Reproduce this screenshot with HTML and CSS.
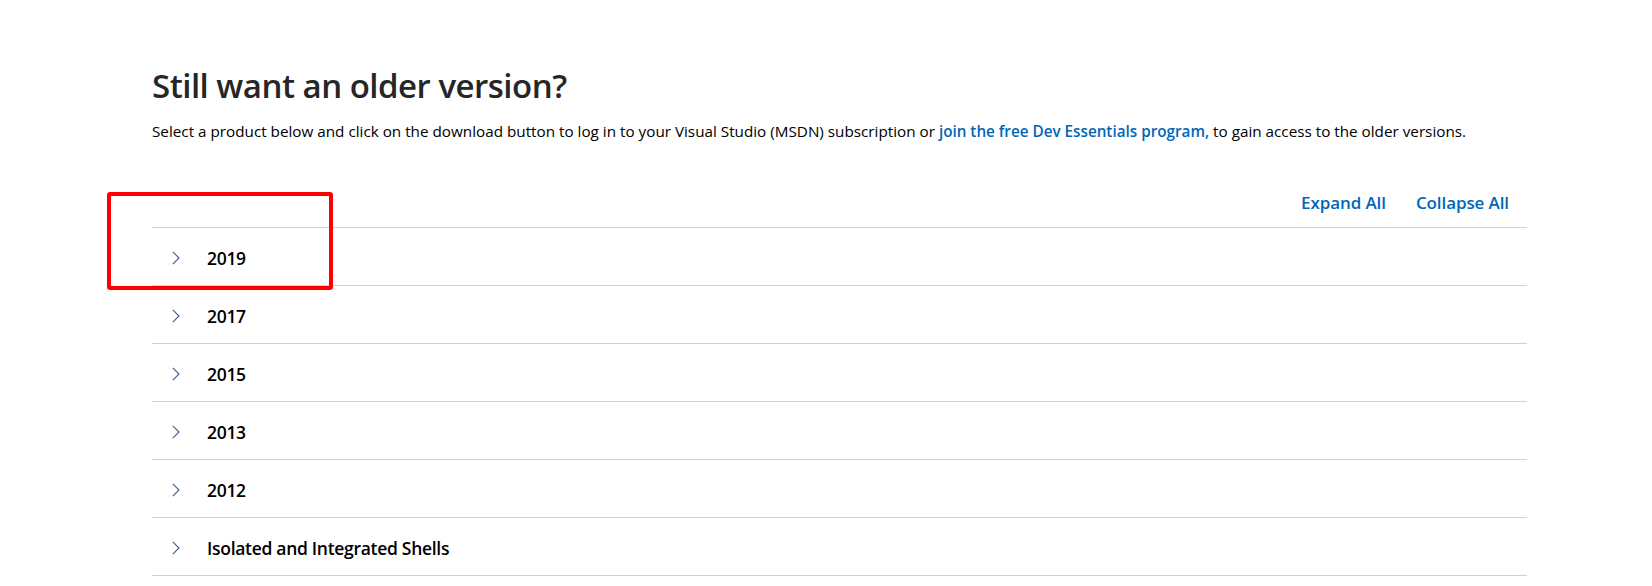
FILE: index.html
```html
<!DOCTYPE html>
<html lang="en">
<head>
<meta charset="utf-8">
<title>Still want an older version?</title>
<link rel="stylesheet" href="styles.css">
</head>
<body>
<main class="page">
  <h2 class="title">Still want an older version?</h2>
  <p class="intro">Select a product below and click on the download button to log in to your Visual Studio (MSDN) subscription or <a class="link" href="#">join the free Dev Essentials program,</a> to gain access to the older versions.</p>
  <div class="toolbar">
    <a class="tool-link" href="#">Expand All</a>
    <a class="tool-link" href="#">Collapse All</a>
  </div>
  <ul class="list">
    <li class="row"><svg class="chev" width="8" height="14" viewBox="0 0 8 14"><polyline points="0.8,0.8 7,7 0.8,13.2"/></svg><span class="label">2019</span></li>
    <li class="row"><svg class="chev" width="8" height="14" viewBox="0 0 8 14"><polyline points="0.8,0.8 7,7 0.8,13.2"/></svg><span class="label">2017</span></li>
    <li class="row"><svg class="chev" width="8" height="14" viewBox="0 0 8 14"><polyline points="0.8,0.8 7,7 0.8,13.2"/></svg><span class="label">2015</span></li>
    <li class="row"><svg class="chev" width="8" height="14" viewBox="0 0 8 14"><polyline points="0.8,0.8 7,7 0.8,13.2"/></svg><span class="label">2013</span></li>
    <li class="row"><svg class="chev" width="8" height="14" viewBox="0 0 8 14"><polyline points="0.8,0.8 7,7 0.8,13.2"/></svg><span class="label">2012</span></li>
    <li class="row"><svg class="chev" width="8" height="14" viewBox="0 0 8 14"><polyline points="0.8,0.8 7,7 0.8,13.2"/></svg><span class="label">Isolated and Integrated Shells</span></li>
  </ul>
  <div class="highlight"></div>
</main>
</body>
</html>
```
FILE: styles.css
```css
html, body {
  margin: 0;
  padding: 0;
  background: #ffffff;
}
body {
  font-family: "Open Sans", "Noto Sans", "Liberation Sans", sans-serif;
  color: #000000;
  overflow: hidden;
}
.page {
  position: relative;
  width: 1375px;
  margin-left: 152px;
  padding-top: 66px;
}
.title {
  margin: 0;
  font-size: 33px;
  line-height: 40px;
  font-weight: 600;
  color: #262626;
  letter-spacing: -0.5px;
}
.intro {
  margin: 15px 0 0;
  font-size: 15.25px;
  line-height: 20px;
  color: #000000;
}
.link {
  color: #0067b8;
  font-weight: 600;
  text-decoration: none;
}
.toolbar {
  display: flex;
  justify-content: flex-end;
  gap: 30px;
  margin-top: 50px;
  padding-right: 18px;
  padding-bottom: 12px;
  border-bottom: 1px solid #d2d2d2;
}
.tool-link {
  font-size: 17px;
  line-height: 24px;
  font-weight: 600;
  color: #0067b8;
  text-decoration: none;
  letter-spacing: -0.1px;
}
.list {
  list-style: none;
  margin: 0;
  padding: 0;
}
.row {
  display: flex;
  align-items: center;
  gap: 27px;
  padding: 18px 0 15px 20px;
  border-bottom: 1px solid #d2d2d2;
}
.chev {
  display: block;
  flex: none;
  fill: none;
  stroke: #3b5b8a;
  stroke-width: 1.1;
}
.label {
  font-size: 17.5px;
  line-height: 24px;
  font-weight: 600;
  color: #000000;
  letter-spacing: -0.3px;
}
.highlight {
  position: absolute;
  left: -45px;
  top: 192px;
  width: 226px;
  height: 98px;
  box-sizing: border-box;
  border: 4.5px solid #ff0000;
  border-radius: 3px;
}
```
